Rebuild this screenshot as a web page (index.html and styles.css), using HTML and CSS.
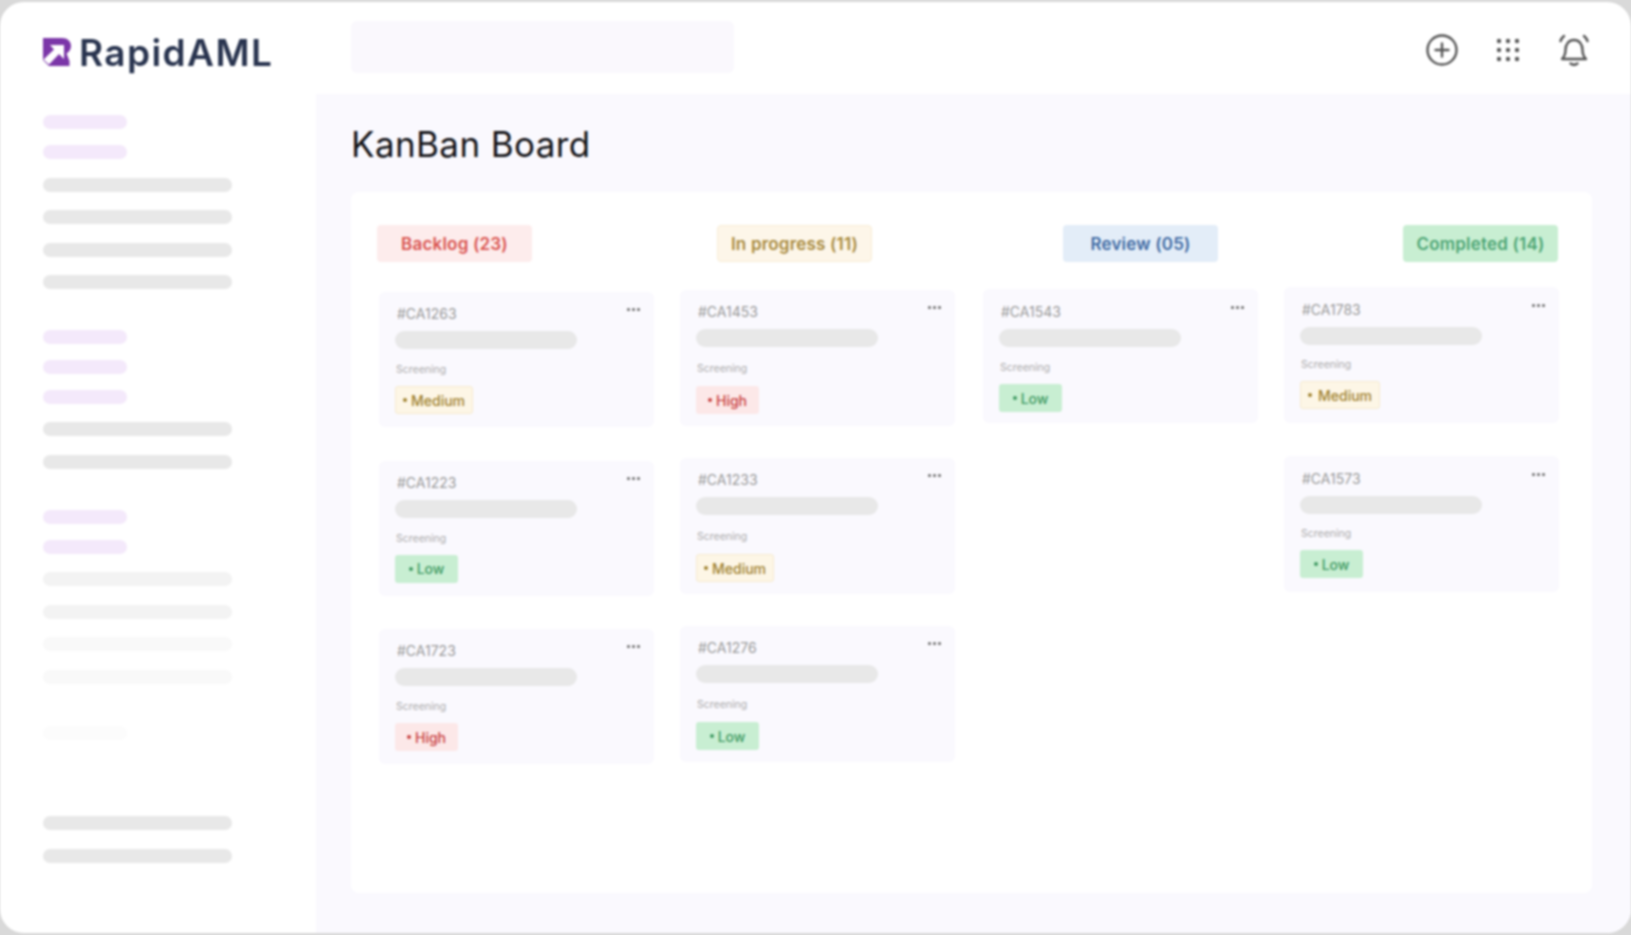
FILE: index.html
```html
<!DOCTYPE html>
<html lang="en">
<head>
    <meta charset="UTF-8">
    <meta name="viewport" content="width=device-width, initial-scale=1.0">
    <title>KanBan Board</title>
    <link rel="stylesheet" href="styles.css">
</head>
<body>
    <div class="app">
        <!-- Sidebar with placeholder menu -->
        <aside class="sidebar">
            <div class="logo">
                <svg class="logo-icon" viewBox="0 0 28 30">
                    <path fill="#7b36a8" d="M0 1H19C24.500 1 28 4.500 28 9C28 12.500 26 15 23.500 16.500L26.500 24V29H6L2 25L0 23Z"/>
                    <path fill="#fff" d="M7 8H21V22L16 17L6 27.500L.5 22.500L11 12.500Z"/>
                </svg>
                <span class="logo-text">RapidAML</span>
            </div>
            <div class="menu">
                <div class="menu-group">
                    <div class="line short"></div>
                    <div class="line short"></div>
                    <div class="line"></div>
                    <div class="line"></div>
                    <div class="line"></div>
                    <div class="line"></div>
                </div>
                <div class="menu-group">
                    <div class="line short"></div>
                    <div class="line short"></div>
                    <div class="line short"></div>
                    <div class="line"></div>
                    <div class="line"></div>
                </div>
                <div class="menu-group">
                    <div class="line short"></div>
                    <div class="line short"></div>
                    <div class="line fade-1"></div>
                    <div class="line fade-1"></div>
                    <div class="line fade-2"></div>
                    <div class="line fade-2"></div>
                </div>
                <div class="line short fade-3"></div>
            </div>
            <div class="menu-bottom">
                <div class="line"></div>
                <div class="line"></div>
            </div>
        </aside>

        <div class="content">
            <header class="topbar">
                <div class="search"></div>
                <div class="top-icons">
                    <svg class="top-icon" viewBox="0 0 32 32">
                        <circle cx="16" cy="16" r="14.500"/>
                        <path d="M16 9.500v13M9.500 16h13"/>
                    </svg>
                    <svg class="top-icon grid-icon" viewBox="0 0 24 24">
                        <circle cx="3" cy="3" r="2.200"/><circle cx="12" cy="3" r="2.200"/><circle cx="21" cy="3" r="2.200"/>
                        <circle cx="3" cy="12" r="2.200"/><circle cx="12" cy="12" r="2.200"/><circle cx="21" cy="12" r="2.200"/>
                        <circle cx="3" cy="21" r="2.200"/><circle cx="12" cy="21" r="2.200"/><circle cx="21" cy="21" r="2.200"/>
                    </svg>
                    <svg class="top-icon bell-icon" viewBox="0 0 32 32">
                        <path d="M4 25h24c-2.500-2.500-3.500-4-3.500-9 0-6-3.500-10-8.500-10S7.500 10 7.500 16c0 5-1 6.500-3.500 9z"/>
                        <path d="M12.500 29.500c2 1.500 5 1.500 7 0M2.500 7c.7-2 1.700-3.500 3.500-5M29.500 7c-.7-2-1.700-3.500-3.500-5"/>
                    </svg>
                </div>
            </header>

            <main class="main">
                <h1>KanBan Board</h1>
                <div class="board">
                    <div class="board-heads">
                        <span class="head head-red">Backlog (23)</span>
                        <span class="head head-yellow">In progress (11)</span>
                        <span class="head head-blue">Review (05)</span>
                        <span class="head head-green">Completed (14)</span>
                    </div>
                    <div class="columns">
                        <div class="col col-1">
                            <div class="card">
                                <div class="card-top"><span class="card-id">#CA1263</span><span class="dots"><i></i><i></i><i></i></span></div>
                                <div class="card-bar"></div>
                                <div class="card-sub">Screening</div>
                                <span class="tag tag-medium">Medium</span>
                            </div>
                            <div class="card">
                                <div class="card-top"><span class="card-id">#CA1223</span><span class="dots"><i></i><i></i><i></i></span></div>
                                <div class="card-bar"></div>
                                <div class="card-sub">Screening</div>
                                <span class="tag tag-low">Low</span>
                            </div>
                            <div class="card">
                                <div class="card-top"><span class="card-id">#CA1723</span><span class="dots"><i></i><i></i><i></i></span></div>
                                <div class="card-bar"></div>
                                <div class="card-sub">Screening</div>
                                <span class="tag tag-high">High</span>
                            </div>
                        </div>
                        <div class="col col-2">
                            <div class="card">
                                <div class="card-top"><span class="card-id">#CA1453</span><span class="dots"><i></i><i></i><i></i></span></div>
                                <div class="card-bar"></div>
                                <div class="card-sub">Screening</div>
                                <span class="tag tag-high">High</span>
                            </div>
                            <div class="card">
                                <div class="card-top"><span class="card-id">#CA1233</span><span class="dots"><i></i><i></i><i></i></span></div>
                                <div class="card-bar"></div>
                                <div class="card-sub">Screening</div>
                                <span class="tag tag-medium">Medium</span>
                            </div>
                            <div class="card">
                                <div class="card-top"><span class="card-id">#CA1276</span><span class="dots"><i></i><i></i><i></i></span></div>
                                <div class="card-bar"></div>
                                <div class="card-sub">Screening</div>
                                <span class="tag tag-low">Low</span>
                            </div>
                        </div>
                        <div class="col col-3">
                            <div class="card">
                                <div class="card-top"><span class="card-id">#CA1543</span><span class="dots"><i></i><i></i><i></i></span></div>
                                <div class="card-bar"></div>
                                <div class="card-sub">Screening</div>
                                <span class="tag tag-low">Low</span>
                            </div>
                        </div>
                        <div class="col col-4">
                            <div class="card">
                                <div class="card-top"><span class="card-id">#CA1783</span><span class="dots"><i></i><i></i><i></i></span></div>
                                <div class="card-bar"></div>
                                <div class="card-sub">Screening</div>
                                <span class="tag tag-medium tag-wide">Medium</span>
                            </div>
                            <div class="card">
                                <div class="card-top"><span class="card-id">#CA1573</span><span class="dots"><i></i><i></i><i></i></span></div>
                                <div class="card-bar"></div>
                                <div class="card-sub">Screening</div>
                                <span class="tag tag-low">Low</span>
                            </div>
                        </div>
                    </div>
                </div>
            </main>
        </div>
    </div>
</body>
</html>
```

FILE: styles.css
```css
html, body {
    height: 100%;
}
body {
    margin: 0;
    background-color: #d9d9d9;
    font-family: Inter, "Open Sans", sans-serif;
    overflow: hidden;
}
.app {
    display: flex;
    height: 931px;
    margin-top: 2px;
    background-color: #fff;
    border-radius: 24px;
    overflow: hidden;
    filter: blur(0.8px);
}

/* Sidebar */
.sidebar {
    width: 316px;
    flex-shrink: 0;
    padding: 0 0 0 43px;
    box-sizing: border-box;
}
.logo {
    display: flex;
    align-items: center;
    gap: 8px;
    height: 62px;
    margin-top: 19px;
}
.logo-icon {
    width: 28px;
    height: 30px;
}
.logo-text {
    font-size: 37px;
    font-weight: 600;
    letter-spacing: 1.400px;
    color: #29344f;
}
.menu {
    margin-top: 32px;
    display: flex;
    flex-direction: column;
    gap: 40.500px;
}
.menu-group {
    display: flex;
    flex-direction: column;
    gap: 18.600px;
}
.line {
    width: 189px;
    height: 14px;
    border-radius: 7px;
    background-color: #e8e8e8;
}
.line.short {
    width: 84px;
    background-color: #f4e9fb;
}
.short + .short {
    margin-top: -2.600px;
}
.line.fade-1 {
    background-color: #f3f3f3;
}
.line.fade-2 {
    background-color: #f9f9f9;
}
.line.fade-3 {
    background-color: #fcfcfc;
    margin-top: 2px;
}
.menu-bottom {
    margin-top: 76px;
    display: flex;
    flex-direction: column;
    gap: 19px;
}

/* Top bar */
.content {
    flex: 1;
    display: flex;
    flex-direction: column;
    min-width: 0;
}
.topbar {
    height: 92px;
    flex-shrink: 0;
    display: flex;
    align-items: flex-start;
    justify-content: space-between;
    padding: 19px 41px 0 35px;
    box-sizing: border-box;
}
.search {
    width: 383px;
    height: 52px;
    border-radius: 6px;
    background-color: #faf8fd;
}
.top-icons {
    display: flex;
    align-items: center;
    gap: 38px;
    margin-top: 13px;
}
.top-icon {
    width: 32px;
    height: 32px;
    fill: none;
    stroke: #555;
    stroke-width: 2.400;
    stroke-linecap: round;
    stroke-linejoin: round;
}
.grid-icon {
    width: 24px;
    height: 24px;
    fill: #555;
    stroke: none;
}

/* Main */
.main {
    flex: 1;
    background-color: #faf9fe;
    padding: 26px 39px 40px 35px;
    box-sizing: border-box;
    display: flex;
    flex-direction: column;
}
h1 {
    margin: 0 0 24px;
    font-size: 35px;
    line-height: 48px;
    font-weight: 400;
    letter-spacing: 0.400px;
    color: #141418;
}
.board {
    flex: 1;
    background-color: #fff;
    border-radius: 8px;
    padding: 33px 33px 0 26px;
}
.board-heads {
    display: flex;
}
.head {
    width: 155px;
    height: 37px;
    box-sizing: border-box;
    display: flex;
    align-items: center;
    justify-content: center;
    border-radius: 4px;
    font-size: 17px;
    font-weight: 600;
    letter-spacing: 0.200px;
}
.head-red {
    background-color: #fdecec;
    color: #d9534f;
}
.head-yellow {
    margin-left: 185px;
    background-color: #fdf6e9;
    border: 1px solid #f8edd6;
    color: #a88a3e;
}
.head-blue {
    margin-left: 191px;
    background-color: #e3edf8;
    color: #3f6aa3;
}
.head-green {
    margin-left: 185px;
    background-color: #c8eed2;
    color: #4da574;
}

/* Cards */
.columns {
    display: flex;
    gap: 27px;
    margin-left: 2px;
}
.col {
    width: 275px;
    display: flex;
    flex-direction: column;
}
.col-1 {
    margin-top: 30px;
    gap: 33.500px;
}
.col-1 .card {
    height: 135px;
}
.col-2 {
    margin: 28px 0 0 -1px;
    gap: 32px;
}
.col-2 .card-sub {
    margin-top: 15px;
}
.col-2 .tag {
    margin-top: 10px;
}
.col-3 {
    margin: 27px 0 0 1px;
}
.col-3 .card {
    height: 134px;
    padding-top: 14px;
}
.col-4 {
    margin: 25px 0 0 -1px;
    gap: 33px;
}
.col-4 .card {
    padding-top: 14px;
}
.col-4 .card-sub {
    margin-top: 13px;
}
.card {
    height: 136px;
    box-sizing: border-box;
    padding: 13px 14px 0 16px;
    background-color: #faf9fe;
    border-radius: 6px;
}
.card-top {
    display: flex;
    justify-content: space-between;
    align-items: flex-start;
    height: 26px;
}
.card-id {
    font-size: 14px;
    line-height: 18px;
    color: #999;
    padding-left: 2px;
}
.dots {
    display: flex;
    gap: 2px;
    margin-top: 3px;
}
.dots i {
    width: 3px;
    height: 3px;
    border-radius: 50%;
    background-color: #666;
}
.card-bar {
    width: 182px;
    height: 18px;
    border-radius: 9px;
    background-color: #e8e8e8;
}
.card-sub {
    margin-top: 14px;
    padding-left: 1px;
    font-size: 10.500px;
    line-height: 14px;
    color: #aaa;
}
.tag {
    display: inline-flex;
    align-items: center;
    justify-content: center;
    gap: 4px;
    min-width: 63px;
    height: 28px;
    margin-top: 9px;
    padding: 0 7px;
    box-sizing: border-box;
    border-radius: 3px;
    font-size: 14px;
    font-weight: 500;
}
.tag::before {
    content: "";
    width: 4px;
    height: 4px;
    border-radius: 50%;
    background-color: currentColor;
}
.tag-medium {
    background-color: #fdf6e6;
    border: 1px solid #f6ebd0;
    color: #a0812f;
}
.tag-wide {
    gap: 6px;
}
.tag-high {
    background-color: #fce8e8;
    color: #c8413f;
}
.tag-low {
    background-color: #c8eed2;
    color: #3f9a63;
}
```
